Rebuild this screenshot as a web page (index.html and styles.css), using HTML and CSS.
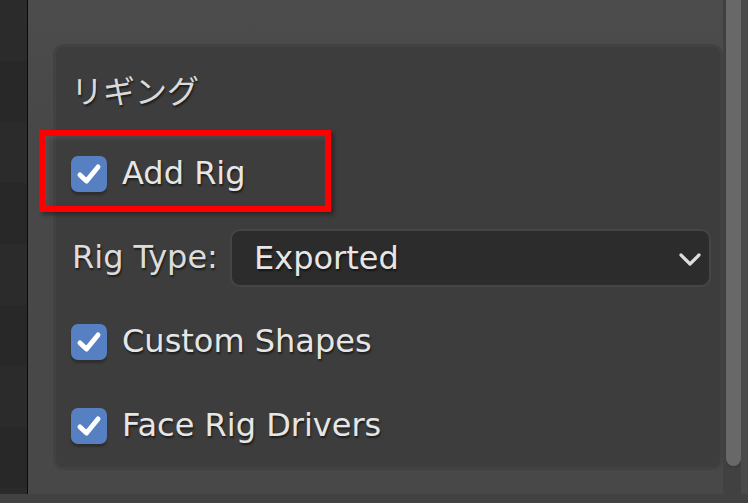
FILE: index.html
```
<!DOCTYPE html>
<html>
<head>
<meta charset="utf-8">
<title>リギング</title>
<link rel="stylesheet" href="styles.css">
</head>
<body>
<div class="app">
  <div class="workspace">
    <div class="outliner">
      <div class="band"></div><div class="band alt"></div>
      <div class="band"></div><div class="band alt"></div>
      <div class="band"></div><div class="band alt"></div>
      <div class="band"></div><div class="band alt"></div>
      <div class="band"></div>
    </div>
    <div class="properties">
      <div class="panel">
        <div class="row header">リギング</div>
        <div class="row">
          <span class="checkbox"><svg viewBox="0 0 36 36" width="36" height="36"><path d="M9 19 L15.5 25 L27 11" fill="none" stroke="#fff" stroke-width="5" stroke-linecap="round" stroke-linejoin="round"/></svg></span>
          <span class="label">Add Rig</span>
        </div>
        <div class="row">
          <span class="field-label">Rig Type:</span>
          <div class="dropdown">
            <span class="label">Exported</span>
            <svg class="chevron" viewBox="0 0 22 14" width="22" height="14"><path d="M2 2 L11 11 L20 2" fill="none" stroke="#dcdcdc" stroke-width="3.2" stroke-linecap="round" stroke-linejoin="round"/></svg>
          </div>
        </div>
        <div class="row">
          <span class="checkbox"><svg viewBox="0 0 36 36" width="36" height="36"><path d="M9 19 L15.5 25 L27 11" fill="none" stroke="#fff" stroke-width="5" stroke-linecap="round" stroke-linejoin="round"/></svg></span>
          <span class="label">Custom Shapes</span>
        </div>
        <div class="row">
          <span class="checkbox"><svg viewBox="0 0 36 36" width="36" height="36"><path d="M9 19 L15.5 25 L27 11" fill="none" stroke="#fff" stroke-width="5" stroke-linecap="round" stroke-linejoin="round"/></svg></span>
          <span class="label">Face Rig Drivers</span>
        </div>
        <div class="callout"></div>
      </div>
    </div>
    <div class="scroll">
      <div class="thumb"></div>
    </div>
    <div class="edge"></div>
  </div>
  <div class="footer"></div>
</div>
</body>
</html>
```
FILE: styles.css
```
html, body {
  margin: 0;
  padding: 0;
}
body {
  width: 748px;
  height: 503px;
  overflow: hidden;
  background: #484848;
  font-family: "DejaVu Sans", "Noto Sans CJK JP", sans-serif;
}
.app {
  display: grid;
  grid-template-rows: 494px 9px;
  height: 503px;
}
.workspace {
  display: flex;
  overflow: hidden;
}
.outliner {
  width: 27px;
  border-right: 1px solid #0a0a0a;
  display: flex;
  flex-direction: column;
}
.band {
  height: 61px;
  flex: none;
  background: #2b2b2b;
}
.band.alt {
  background: #282828;
}
.properties {
  width: 695px;
  padding: 44px 0 0 25px;
  box-sizing: border-box;
  background: linear-gradient(#4c4c4c, #484848 120px);
}
.panel {
  position: relative;
  padding: 0 0 0 15px;
  background: #3d3d3d;
  border: 3px solid #424242;
  border-radius: 11px;
}
.row {
  height: 84px;
  display: flex;
  align-items: center;
  color: #e6e6e6;
  font-size: 32px;
  text-shadow: 1px 2px 2px rgba(0, 0, 0, 0.55);
}
.header {
  font-family: "Noto Sans CJK JP", sans-serif;
  font-size: 32px;
  color: #dadada;
}
.checkbox {
  width: 36px;
  height: 36px;
  flex: none;
  border-radius: 7px;
  background: #5680c2;
  box-shadow: 0 3px 2px #2e2e2e;
  margin-right: 15px;
  margin-top: 1px;
}
.checkbox svg {
  display: block;
}
.field-label {
  color: #dcdcdc;
  width: 158px;
  flex: none;
  padding-left: 1px;
}
.dropdown {
  width: 481px;
  height: 58px;
  box-sizing: border-box;
  display: flex;
  align-items: center;
  justify-content: space-between;
  padding: 0 8px 0 22px;
  background: #2c2c2c;
  border: 2px solid #454545;
  border-radius: 10px;
  margin-top: 1px;
}
.chevron {
  display: block;
  margin-top: 4px;
}
.callout {
  position: absolute;
  left: -17px;
  top: 83px;
  width: 292px;
  height: 82px;
  box-sizing: border-box;
  border: 6px solid #ff0000;
  box-shadow: 3px 3px 4px rgba(0, 0, 0, 0.35), inset 3px 3px 4px rgba(255, 255, 255, 0.06);
}
.scroll {
  width: 18px;
  padding-left: 3px;
  box-sizing: border-box;
  background: #414141;
}
.thumb {
  width: 15px;
  height: 466px;
  background: #686868;
  border-radius: 0 0 8px 8px;
  box-shadow: 0 2px 2px #3c3c3c;
}
.edge {
  width: 7px;
  background: #4a4a4a;
}
.footer {
  background: #424242;
}
```
